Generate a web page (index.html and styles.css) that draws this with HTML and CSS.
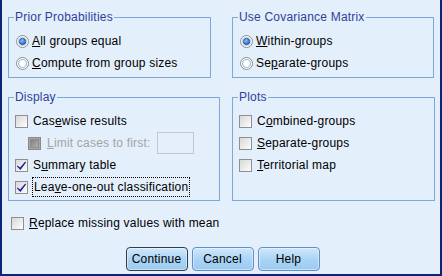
FILE: index.html
```html
<!DOCTYPE html>
<html>
<head>
<meta charset="utf-8">
<link rel="stylesheet" href="styles.css">
</head>
<body>
<div class="window">
  <div class="groups">
    <fieldset class="group prior">
      <legend>Prior Probabilities</legend>
      <label class="row">
        <svg class="radio" width="13" height="13" viewBox="0 0 13 13">
          <defs>
            <radialGradient id="rdot" cx="0.4" cy="0.35" r="0.7">
              <stop offset="0" stop-color="#7fc0ff"/>
              <stop offset="1" stop-color="#1f5fc8"/>
            </radialGradient>
            <linearGradient id="cbg" x1="0" y1="0" x2="1" y2="1">
              <stop offset="0" stop-color="#d6d6d6"/>
              <stop offset="1" stop-color="#ffffff"/>
            </linearGradient>
            <linearGradient id="cdis" x1="0" y1="0" x2="1" y2="1">
              <stop offset="0" stop-color="#7d7d7d"/>
              <stop offset="1" stop-color="#b5b5b5"/>
            </linearGradient>
          </defs>
          <circle cx="6.5" cy="6.5" r="6" fill="#ffffff" stroke="#8c8e90"/>
          <circle cx="6.5" cy="6.5" r="4.3" fill="#e8eef4" stroke="#c4ccd4" stroke-width="0.8"/>
          <circle cx="6.5" cy="6.5" r="3.2" fill="url(#rdot)" stroke="#1a4aa0" stroke-width="0.7"/>
        </svg>
        <span><u>A</u>ll groups equal</span>
      </label>
      <label class="row">
        <svg class="radio" width="13" height="13" viewBox="0 0 13 13">
          <circle cx="6.5" cy="6.5" r="6" fill="#ffffff" stroke="#8c8e90"/>
          <circle cx="6.5" cy="6.5" r="4" fill="#ffffff" stroke="#a9bdd2" stroke-width="1.2"/>
        </svg>
        <span><u>C</u>ompute from group sizes</span>
      </label>
    </fieldset>

    <fieldset class="group cov">
      <legend>Use Covariance Matrix</legend>
      <label class="row">
        <svg class="radio" width="13" height="13" viewBox="0 0 13 13">
          <circle cx="6.5" cy="6.5" r="6" fill="#ffffff" stroke="#8c8e90"/>
          <circle cx="6.5" cy="6.5" r="4.3" fill="#e8eef4" stroke="#c4ccd4" stroke-width="0.8"/>
          <circle cx="6.5" cy="6.5" r="3.2" fill="url(#rdot)" stroke="#1a4aa0" stroke-width="0.7"/>
        </svg>
        <span><u>W</u>ithin-groups</span>
      </label>
      <label class="row">
        <svg class="radio" width="13" height="13" viewBox="0 0 13 13">
          <circle cx="6.5" cy="6.5" r="6" fill="#ffffff" stroke="#8c8e90"/>
          <circle cx="6.5" cy="6.5" r="4" fill="#ffffff" stroke="#a9bdd2" stroke-width="1.2"/>
        </svg>
        <span>Se<u>p</u>arate-groups</span>
      </label>
    </fieldset>

    <fieldset class="group display">
      <legend>Display</legend>
      <label class="row">
        <svg class="check" width="13" height="13" viewBox="0 0 13 13">
          <rect x="0.5" y="0.5" width="12" height="12" fill="url(#cbg)" stroke="#8e8f8f"/>
        </svg>
        <span>Cas<u>e</u>wise results</span>
      </label>
      <label class="row indent disabled">
        <svg class="check" width="13" height="13" viewBox="0 0 13 13">
          <rect x="0.5" y="0.5" width="12" height="12" fill="#a8a8a8" stroke="#8a8a8a"/>
          <rect x="2.5" y="2.5" width="8" height="8" fill="url(#cdis)" stroke="#8c8c8c"/>
        </svg>
        <span class="limit-text"><u>L</u>imit cases to first:</span>
        <span class="numbox"></span>
      </label>
      <label class="row">
        <svg class="check" width="13" height="13" viewBox="0 0 13 13">
          <rect x="0.5" y="0.5" width="12" height="12" fill="url(#cbg)" stroke="#8e8f8f"/>
          <path d="M2.6 6.4 L5.1 8.4 L10.2 2.4 L11 3.4 L5.4 11 L2 7.6 Z" fill="#1e1e9c"/>
        </svg>
        <span>S<u>u</u>mmary table</span>
      </label>
      <label class="row">
        <svg class="check" width="13" height="13" viewBox="0 0 13 13">
          <rect x="0.5" y="0.5" width="12" height="12" fill="url(#cbg)" stroke="#8e8f8f"/>
          <path d="M2.6 6.4 L5.1 8.4 L10.2 2.4 L11 3.4 L5.4 11 L2 7.6 Z" fill="#1e1e9c"/>
        </svg>
        <span class="focus">Lea<u>v</u>e-one-out classification</span>
      </label>
    </fieldset>

    <fieldset class="group plots">
      <legend>Plots</legend>
      <label class="row">
        <svg class="check" width="13" height="13" viewBox="0 0 13 13">
          <rect x="0.5" y="0.5" width="12" height="12" fill="url(#cbg)" stroke="#8e8f8f"/>
        </svg>
        <span>C<u>o</u>mbined-groups</span>
      </label>
      <label class="row">
        <svg class="check" width="13" height="13" viewBox="0 0 13 13">
          <rect x="0.5" y="0.5" width="12" height="12" fill="url(#cbg)" stroke="#8e8f8f"/>
        </svg>
        <span><u>S</u>eparate-groups</span>
      </label>
      <label class="row">
        <svg class="check" width="13" height="13" viewBox="0 0 13 13">
          <rect x="0.5" y="0.5" width="12" height="12" fill="url(#cbg)" stroke="#8e8f8f"/>
        </svg>
        <span><u>T</u>erritorial map</span>
      </label>
    </fieldset>
  </div>

  <label class="row replace">
    <svg class="check" width="13" height="13" viewBox="0 0 13 13">
      <rect x="0.5" y="0.5" width="12" height="12" fill="url(#cbg)" stroke="#8e8f8f"/>
    </svg>
    <span><u>R</u>eplace missing values with mean</span>
  </label>

  <div class="buttons">
    <button class="btn default">Continue</button>
    <button class="btn">Cancel</button>
    <button class="btn">Help</button>
  </div>
</div>
</body>
</html>
```

FILE: styles.css
```css
html, body {
  margin: 0;
  padding: 0;
}
body {
  width: 442px;
  height: 276px;
  overflow: hidden;
  font-family: "Liberation Sans", Arial, sans-serif;
  font-size: 12px;
  letter-spacing: 0.2px;
  color: #000;
}
.window {
  box-sizing: border-box;
  width: 442px;
  height: 276px;
  background: #e3effb;
  border-left: 2px solid #0c2478;
  border-right: 2px solid #0c2478;
  border-bottom: 2px solid #0c2478;
  padding: 10px 5px 0 6px;
}
.groups {
  display: grid;
  grid-template-columns: 212px 203px;
  column-gap: 12px;
  row-gap: 12px;
}
.group {
  margin: 0;
  min-inline-size: 0;
  border: 1px solid #7ea8d7;
  padding: 6px 6px 2px 6px;
}
.prior, .cov {
  padding-bottom: 3px;
}
.prior {
  width: 203px;
  box-sizing: border-box;
}
.cov {
  width: 202px;
  box-sizing: border-box;
}
.group legend {
  padding: 0 1px;
  margin-left: -1px;
  line-height: 14px;
  color: #2f3f9c;
}
.row {
  display: flex;
  align-items: center;
  height: 22px;
  white-space: nowrap;
}
.radio {
  flex: none;
  margin-left: 1px;
  margin-right: 3px;
}
.check {
  flex: none;
  margin-right: 5px;
}
.indent {
  padding-left: 13px;
}
.indent .check {
  margin-right: 6px;
}
.disabled .limit-text {
  color: #a3a3a3;
}
.numbox {
  box-sizing: border-box;
  width: 37px;
  height: 22px;
  margin-left: 6px;
  border: 1px solid #c6c6c6;
}
.focus {
  outline: 1px dotted #000;
  padding: 0 1px;
  line-height: 18px;
  margin-left: 0;
}
.replace {
  margin-top: 11px;
  margin-left: 3px;
}
.buttons {
  display: flex;
  justify-content: center;
  gap: 4px;
  margin-top: 13px;
  padding-left: 2px;
}
.btn {
  box-sizing: border-box;
  width: 62px;
  height: 24px;
  padding: 0;
  font-family: "Liberation Sans", Arial, sans-serif;
  font-size: 12px;
  letter-spacing: 0.2px;
  color: #000;
  border: 1px solid #5f90cb;
  border-radius: 4px;
  background: linear-gradient(#cfe8fb, #a9d3f4 55%, #9ccbf1);
  box-shadow: inset 0 0 0 1px rgba(255,255,255,0.45);
}
.btn.default {
  border-color: #2f3d4c;
}
```
